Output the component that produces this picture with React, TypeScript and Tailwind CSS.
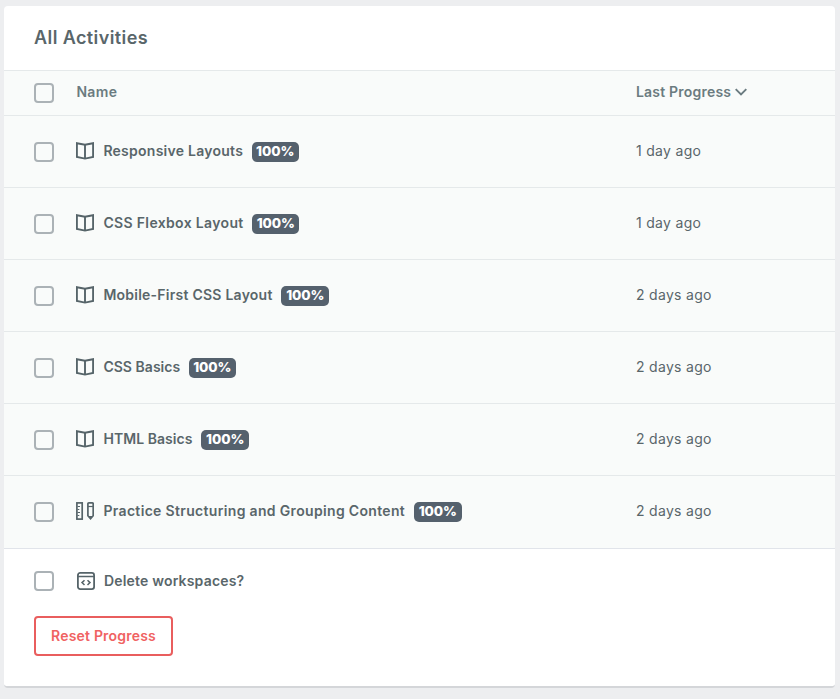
import React from 'react';

type Activity = {
  name: string;
  tracking: string;
  kind: 'lesson' | 'practice';
  progress: string;
  badge: string;
};

const activities: Activity[] = [
  { name: 'Responsive Layouts', tracking: 'tracking-[0.25px]', kind: 'lesson', progress: '1 day ago', badge: 'w-[47px]' },
  { name: 'CSS Flexbox Layout', tracking: 'tracking-[0.34px]', kind: 'lesson', progress: '1 day ago', badge: 'w-[47px]' },
  { name: 'Mobile-First CSS Layout', tracking: 'tracking-[0.24px]', kind: 'lesson', progress: '2 days ago', badge: 'w-12' },
  { name: 'CSS Basics', tracking: 'tracking-[0.03px]', kind: 'lesson', progress: '2 days ago', badge: 'w-[47px]' },
  { name: 'HTML Basics', tracking: 'tracking-[0.06px]', kind: 'lesson', progress: '2 days ago', badge: 'w-12' },
  { name: 'Practice Structuring and Grouping Content', tracking: 'tracking-[0.33px]', kind: 'practice', progress: '2 days ago', badge: 'w-12' },
];

function Checkbox() {
  return (
    <input
      type="checkbox"
      className="block size-5 shrink-0 appearance-none rounded-[4px] border-2 border-[#abb2b6]"
    />
  );
}

function BookIcon() {
  return (
    <svg className="block h-[18px] w-[18px] shrink-0" viewBox="0 0 18 18" fill="none" stroke="#566469" strokeWidth="1.9">
      <path d="M.9 1.200 9 2.700l8.100-1.500v13.700L9 16.600.9 14.900Z" />
      <path d="M9 3v13.500" />
    </svg>
  );
}

function ToolsIcon() {
  return (
    <svg className="block h-[18px] w-[18px] shrink-0" viewBox="0 0 18 18" fill="none" stroke="#566469" strokeWidth="1.7">
      <rect x=".9" y=".9" width="5.300" height="16.200" />
      <path d="M1.500 4.500h2.500M1.500 7.500h1.800M1.500 10.500h2.500M1.500 13.500h1.800" strokeWidth="1" />
      <path d="M11.900 13.700V1.900q0-1 1-1h3.300q1 0 1 1v11.800l-2.650 3Z" />
      <path d="M12 4.500h5" strokeWidth="1.200" />
      <path d="M12.300 14h4.500l-2.250 2.800Z" fill="#566469" stroke="none" />
    </svg>
  );
}

function WorkspaceIcon() {
  return (
    <svg className="block h-[18px] w-[18px] shrink-0" viewBox="0 0 18 18" fill="none" stroke="#566469" strokeWidth="1.8">
      <rect x=".9" y=".9" width="16.200" height="16.200" rx="2.300" />
      <path d="M1 4.500h16" strokeWidth="1.300" />
      <path d="m7.500 8.200-2.500 2.400 2.500 2.400M10.500 8.200l2.500 2.400-2.500 2.400" strokeWidth="1.500" />
    </svg>
  );
}

function ActivityRow({ activity }: { activity: Activity }) {
  return (
    <div className="border-b border-[#e5e9ea] pl-[30px] last:border-[#e1e4ea] last:pb-px">
      <div className="flex h-[71px] items-center">
        <div className="flex w-[602px] items-center">
          <div className="pt-px"><Checkbox /></div>
          <div className="ml-[22px] mb-px">{activity.kind === 'lesson' ? <BookIcon /> : <ToolsIcon />}</div>
          <span className={`ml-[9.400px] mb-px whitespace-nowrap font-semibold ${activity.tracking}`}>{activity.name}</span>
          <span className={`ml-[8.600px] mt-px flex h-5 items-center justify-center rounded-[5px] bg-[#55616d] pb-0.5 text-[13.500px] font-extrabold tracking-[-0.1px] text-white ${activity.badge}`}>
            100%
          </span>
        </div>
        <span className="mb-px whitespace-nowrap tracking-[0.3px]">{activity.progress}</span>
      </div>
    </div>
  );
}

export default function App() {
  return (
    <div className="h-[699px] bg-[#edeef0] pl-1 pr-[5px] pt-1.5 font-['Inter',sans-serif] text-sm leading-5 text-[#59666a]">
      <main className="h-[682px] overflow-hidden rounded-[4px] border-b-2 border-[#d4d6d9] bg-white">
        <header className="flex h-16 items-center pl-[30px]">
          <h1 className="text-lg font-semibold leading-6 tracking-[0.41px]">All Activities</h1>
        </header>
        <section className="bg-[#f9fbfa]">
          <div className="flex h-[46px] items-center border-y border-[#e5e9ea] pb-0.5 pl-[30px] font-semibold text-[#6b7b80]">
            <div className="flex w-[602px] items-center">
              <div className="pt-px"><Checkbox /></div>
              <span className="ml-[22.400px] mb-px tracking-[0.35px]">Name</span>
            </div>
            <span className="mb-px tracking-[0.2px]">Last Progress</span>
            <svg className="ml-1 h-2 w-3" viewBox="0 0 12 8" fill="none" stroke="currentColor" strokeWidth="1.9">
              <path d="m.7 1.200 5.300 5.300 5.300-5.300" />
            </svg>
          </div>
          <div>
            {activities.map((activity) => (
              <ActivityRow key={activity.name} activity={activity} />
            ))}
          </div>
        </section>
        <footer className="pl-[30px] pt-[22px]">
          <label className="flex items-center">
            <Checkbox />
            <div className="ml-[23px]"><WorkspaceIcon /></div>
            <span className="ml-[9px] font-semibold tracking-[0.18px]">Delete workspaces?</span>
          </label>
          <button className="mt-[25px] flex h-10 w-[139px] items-center justify-center whitespace-nowrap rounded-[4px] border-2 border-[#e95e5e] font-semibold tracking-[0.2px] text-[#f06262]">
            Reset Progress
          </button>
        </footer>
      </main>
    </div>
  );
}
